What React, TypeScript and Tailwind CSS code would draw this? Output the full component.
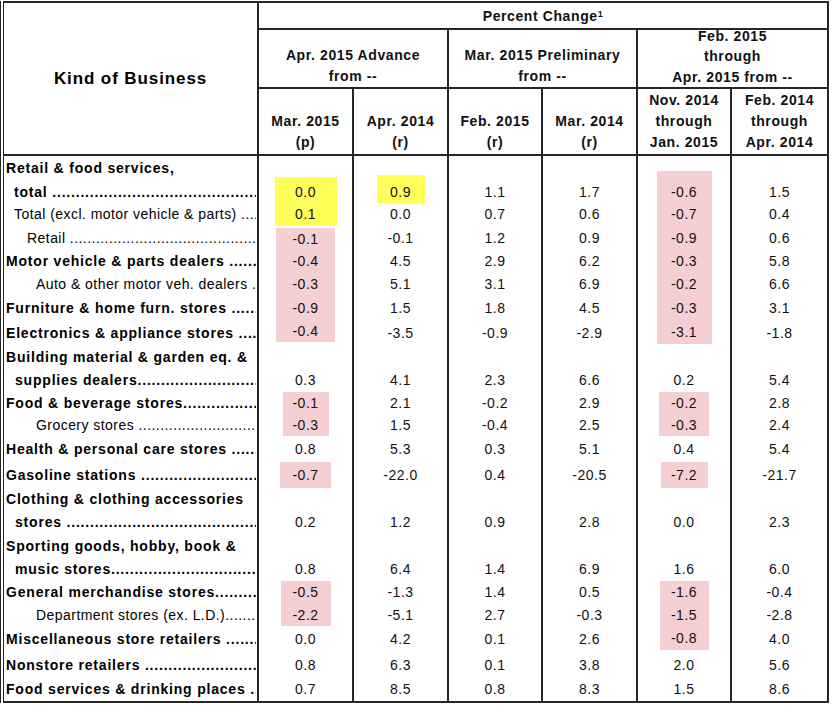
import React from "react";

type Tone = "y" | "p";
type Mark = { c: number; tone: Tone; w: string; extra?: string };
type Row = {
  label: string;
  bold?: boolean;
  pad: string;
  dots?: boolean;
  h: string;
  vals?: string[];
  marks?: Mark[];
};

const TONE: Record<Tone, string> = { y: "bg-[#ffff5a]", p: "bg-[#f5cfd1]" };

const COLS = "grid grid-cols-[255px_95px_95px_94px_95px_94px_97px]";
const LINE = "border-[#262626]";

// pink blocks that run down the Nov-Jan column for the first seven rows
const novPink: Mark = { c: 4, tone: "p", w: "w-[55px]" };
const marPink: Mark = { c: 0, tone: "p", w: "w-[59px]" };

const ROWS: Row[] = [
  {
    label: "Retail & food services,",
    bold: true,
    pad: "pl-[2px]",
    h: "h-[25px]",
    marks: [
      { c: 0, tone: "y", w: "w-[62px]", extra: "self-end h-[4px]" },
      { c: 1, tone: "y", w: "w-[48px]", extra: "self-end h-[6px]" },
      { c: 4, tone: "p", w: "w-[55px]", extra: "self-end h-[10px]" },
    ],
  },
  {
    label: "total ",
    bold: true,
    pad: "pl-[10px]",
    dots: true,
    h: "h-[22px]",
    vals: ["0.0", "0.9", "1.1", "1.7", "-0.6", "1.5"],
    marks: [{ c: 0, tone: "y", w: "w-[62px]" }, { c: 1, tone: "y", w: "w-[48px]" }, novPink],
  },
  {
    label: "Total (excl. motor vehicle & parts) ",
    pad: "pl-[10px]",
    dots: true,
    h: "h-[23px]",
    vals: ["0.1", "0.0", "0.7", "0.6", "-0.7", "0.4"],
    marks: [{ c: 0, tone: "y", w: "w-[62px]" }, novPink],
  },
  {
    label: "Retail ",
    pad: "pl-[23px]",
    dots: true,
    h: "h-[24px]",
    vals: ["-0.1", "-0.1", "1.2", "0.9", "-0.9", "0.6"],
    marks: [{ ...marPink, extra: "mt-[2px]" }, novPink],
  },
  {
    label: "Motor vehicle & parts dealers ",
    bold: true,
    pad: "pl-[2px]",
    dots: true,
    h: "h-[23px]",
    vals: ["-0.4", "4.5", "2.9", "6.2", "-0.3", "5.8"],
    marks: [marPink, novPink],
  },
  {
    label: "Auto & other motor veh. dealers ",
    pad: "pl-[32px]",
    dots: true,
    h: "h-[22px]",
    vals: ["-0.3", "5.1", "3.1", "6.9", "-0.2", "6.6"],
    marks: [marPink, novPink],
  },
  {
    label: "Furniture & home furn. stores ",
    bold: true,
    pad: "pl-[2px]",
    dots: true,
    h: "h-[26px]",
    vals: ["-0.9", "1.5", "1.8", "4.5", "-0.3", "3.1"],
    marks: [marPink, novPink],
  },
  {
    label: "Electronics & appliance stores ",
    bold: true,
    pad: "pl-[2px]",
    dots: true,
    h: "h-[25px]",
    vals: ["-0.4", "-3.5", "-0.9", "-2.9", "-3.1", "-1.8"],
    marks: [
      { ...marPink, extra: "mb-[4px]" },
      { ...novPink, extra: "mb-[2px]" },
    ],
  },
  { label: "Building material & garden eq. &", bold: true, pad: "pl-[2px]", h: "h-[23px]" },
  {
    label: "supplies dealers",
    bold: true,
    pad: "pl-[11px]",
    dots: true,
    h: "h-[23px]",
    vals: ["0.3", "4.1", "2.3", "6.6", "0.2", "5.4"],
  },
  {
    label: "Food & beverage stores",
    bold: true,
    pad: "pl-[2px]",
    dots: true,
    h: "h-[22px]",
    vals: ["-0.1", "2.1", "-0.2", "2.9", "-0.2", "2.8"],
    marks: [{ c: 0, tone: "p", w: "w-[46px]" }, { c: 4, tone: "p", w: "w-[50px]" }],
  },
  {
    label: "Grocery stores ",
    pad: "pl-[32px]",
    dots: true,
    h: "h-[22px]",
    vals: ["-0.3", "1.5", "-0.4", "2.5", "-0.3", "2.4"],
    marks: [{ c: 0, tone: "p", w: "w-[46px]" }, { c: 4, tone: "p", w: "w-[50px]" }],
  },
  {
    label: "Health & personal care stores ",
    bold: true,
    pad: "pl-[2px]",
    dots: true,
    h: "h-[26px]",
    vals: ["0.8", "5.3", "0.3", "5.1", "0.4", "5.4"],
  },
  {
    label: "Gasoline stations ",
    bold: true,
    pad: "pl-[2px]",
    dots: true,
    h: "h-[26px]",
    vals: ["-0.7", "-22.0", "0.4", "-20.5", "-7.2", "-21.7"],
    marks: [{ c: 0, tone: "p", w: "w-[51px]" }, { c: 4, tone: "p", w: "w-[47px]" }],
  },
  { label: "Clothing & clothing accessories", bold: true, pad: "pl-[2px]", h: "h-[23px]" },
  {
    label: "stores ",
    bold: true,
    pad: "pl-[11px]",
    dots: true,
    h: "h-[23px]",
    vals: ["0.2", "1.2", "0.9", "2.8", "0.0", "2.3"],
  },
  { label: "Sporting goods, hobby, book &", bold: true, pad: "pl-[2px]", h: "h-[24px]" },
  {
    label: "music stores",
    bold: true,
    pad: "pl-[11px]",
    dots: true,
    h: "h-[23px]",
    vals: ["0.8", "6.4", "1.4", "6.9", "1.6", "6.0"],
  },
  {
    label: "General merchandise stores",
    bold: true,
    pad: "pl-[2px]",
    dots: true,
    h: "h-[23px]",
    vals: ["-0.5", "-1.3", "1.4", "0.5", "-1.6", "-0.4"],
    marks: [{ c: 0, tone: "p", w: "w-[50px]" }, { c: 4, tone: "p", w: "w-[49px]" }],
  },
  {
    label: "Department stores (ex. L.D.)",
    pad: "pl-[32px]",
    dots: true,
    h: "h-[22px]",
    vals: ["-2.2", "-5.1", "2.7", "-0.3", "-1.5", "-2.8"],
    marks: [{ c: 0, tone: "p", w: "w-[50px]" }, { c: 4, tone: "p", w: "w-[49px]" }],
  },
  {
    label: "Miscellaneous store retailers ",
    bold: true,
    pad: "pl-[2px]",
    dots: true,
    h: "h-[26px]",
    vals: ["0.0", "4.2", "0.1", "2.6", "-0.8", "4.0"],
    marks: [{ c: 4, tone: "p", w: "w-[49px]", extra: "mb-[2px]" }],
  },
  {
    label: "Nonstore retailers ",
    bold: true,
    pad: "pl-[2px]",
    dots: true,
    h: "h-[26px]",
    vals: ["0.8", "6.3", "0.1", "3.8", "2.0", "5.6"],
  },
  {
    label: "Food services & drinking places ",
    bold: true,
    pad: "pl-[2px]",
    dots: true,
    h: "h-[25px]",
    vals: ["0.7", "8.5", "0.8", "8.3", "1.5", "8.6"],
  },
];

const DOTS = ".".repeat(90);

function HeadCell({ lines, className = "" }: { lines: string[]; className?: string }) {
  return (
    <div
      className={`flex flex-col items-center border-r-2 border-b-2 ${LINE} text-[14px] font-bold tracking-[0.6px] text-[#111] ${className}`}
    >
      {lines.map((l) => (
        <span key={l}>{l}</span>
      ))}
    </div>
  );
}

function BodyRow({ row, last }: { row: Row; last: boolean }) {
  const bottom = last ? "border-b-2" : "";
  return (
    <div className={`${COLS} ${row.h}`}>
      <div
        className={`flex items-center overflow-hidden whitespace-nowrap border-r-2 ${bottom} ${LINE} ${row.pad} pr-[1px] text-[14px] text-black ${
          row.bold ? "font-bold tracking-[0.8px]" : "tracking-[0.45px]"
        }`}
      >
        <span className="shrink-0 whitespace-pre">{row.label}</span>
        {row.dots && <span className="min-w-0 flex-1 overflow-hidden">{DOTS}</span>}
      </div>
      {[0, 1, 2, 3, 4, 5].map((c) => {
        const mark = row.marks?.find((m) => m.c === c);
        const val = row.vals?.[c] ?? "";
        return (
          <div key={c} className={`flex justify-center border-r-2 ${bottom} ${LINE} text-[14px] tracking-[0.5px] text-[#111]`}>
            {mark ? (
              <div className={`flex items-center justify-center ${mark.w} ${TONE[mark.tone]} ${mark.extra ?? ""}`}>{val}</div>
            ) : (
              <div className="flex items-center">{val}</div>
            )}
          </div>
        );
      })}
    </div>
  );
}

export default function App() {
  return (
    <div className="min-h-screen bg-white pt-px font-['Liberation_Sans',Arial,sans-serif]">
      <div className={`w-[829px] border-l ${LINE} pl-[2px]`}>
        <div className={`border-l border-t-2 ${LINE}`}>
          <div className={`${COLS} grid-rows-[27px_59px_67px]`}>
            <div
              className={`row-span-3 flex items-center justify-center border-r-2 border-b-2 ${LINE} text-[17px] font-bold tracking-[0.9px] text-black`}
            >
              Kind of Business
            </div>
            <div
              className={`col-span-6 flex items-center justify-center border-r-2 border-b-2 ${LINE} pt-[2px] text-[14px] font-bold tracking-[0.6px] text-[#111]`}
            >
              Percent Change<sup className="relative -top-[3px] text-[9px]">1</sup>
            </div>
            <HeadCell className="col-span-2 justify-end leading-[21px]" lines={["Apr. 2015 Advance", "from --"]} />
            <HeadCell className="col-span-2 justify-end leading-[21px]" lines={["Mar. 2015 Preliminary", "from --"]} />
            <HeadCell
              className="col-span-2 justify-end leading-[20.5px]"
              lines={["Feb. 2015", "through", "Apr. 2015 from --"]}
            />
            <HeadCell className="justify-end pb-px leading-[21px]" lines={["Mar. 2015", "(p)"]} />
            <HeadCell className="justify-end pb-px leading-[21px]" lines={["Apr. 2014", "(r)"]} />
            <HeadCell className="justify-end pb-px leading-[21px]" lines={["Feb. 2015", "(r)"]} />
            <HeadCell className="justify-end pb-px leading-[21px]" lines={["Mar. 2014", "(r)"]} />
            <HeadCell className="justify-end pb-px leading-[21px]" lines={["Nov. 2014", "through", "Jan. 2015"]} />
            <HeadCell className="justify-end pb-px leading-[21px]" lines={["Feb. 2014", "through", "Apr. 2014"]} />
          </div>
          {ROWS.map((r, i) => (
            <BodyRow key={i} row={r} last={i === ROWS.length - 1} />
          ))}
        </div>
      </div>
    </div>
  );
}
